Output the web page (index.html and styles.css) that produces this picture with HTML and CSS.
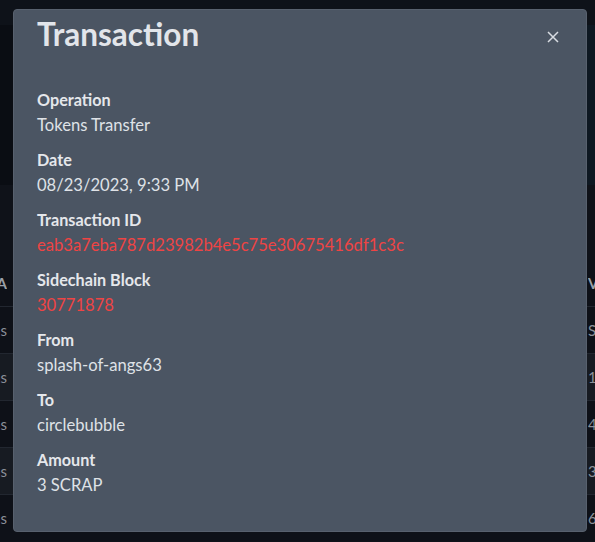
FILE: index.html
```html
<!DOCTYPE html>
<html>
<head>
    <title>Transaction</title>
    <link rel="stylesheet" href="styles.css">
</head>
<body>
    <div class="page">
        <div class="topbar"></div>
        <div class="hero">
            <div class="hero-left"></div>
            <div class="hero-right"></div>
        </div>
        <div class="spacer"></div>
        <div class="table">
            <div class="row head"><span class="cell-l">SYMBOL &nbsp; A</span><span class="cell-r">VALUE</span></div>
            <div class="row"><span class="cell-l">Tokens</span><span class="cell-r">SCRAP</span></div>
            <div class="row alt"><span class="cell-l">Tokens</span><span class="cell-r">1.000</span></div>
            <div class="row"><span class="cell-l">Tokens</span><span class="cell-r">4.000</span></div>
            <div class="row alt"><span class="cell-l">Tokens</span><span class="cell-r">3.000</span></div>
            <div class="row"><span class="cell-l">Tokens</span><span class="cell-r">6.000</span></div>
        </div>
    </div>

    <!-- modal over the dimmed page -->
    <div class="modal">
        <div class="modal-head">
            <h2>Transaction</h2>
            <button class="close" aria-label="Close">
                <svg width="12" height="12" viewBox="0 0 12 12">
                    <path d="M1 1 L11 11 M11 1 L1 11" stroke="#d8dce2" stroke-width="1.5" fill="none"/>
                </svg>
            </button>
        </div>
        <div class="modal-body">
            <div class="field">
                <div class="label">Operation</div>
                <div class="value">Tokens Transfer</div>
            </div>
            <div class="field">
                <div class="label">Date</div>
                <div class="value">08/23/2023, 9:33 PM</div>
            </div>
            <div class="field">
                <div class="label">Transaction ID</div>
                <div class="value link">eab3a7eba787d23982b4e5c75e30675416df1c3c</div>
            </div>
            <div class="field">
                <div class="label">Sidechain Block</div>
                <div class="value link">30771878</div>
            </div>
            <div class="field">
                <div class="label">From</div>
                <div class="value">splash-of-angs63</div>
            </div>
            <div class="field">
                <div class="label">To</div>
                <div class="value">circlebubble</div>
            </div>
            <div class="field">
                <div class="label">Amount</div>
                <div class="value">3 SCRAP</div>
            </div>
        </div>
    </div>
</body>
</html>
```

FILE: styles.css
```css
body {
    margin: 0;
    font-family: Lato, "Open Sans", sans-serif;
    background-color: #0f131a;
    overflow: hidden;
    height: 542px;
}

.page {
    width: 595px;
}

.topbar {
    height: 25px;
    background-color: #0e1219;
}

.hero {
    display: flex;
    height: 160px;
}

.hero-left {
    flex: 1;
    background-color: #0a0d13;
}

.hero-right {
    width: 8px;
    background-color: #0e1822;
}

.spacer {
    height: 75px;
    background-color: #0f1219;
}

.row {
    display: flex;
    justify-content: space-between;
    align-items: center;
    height: 46px;
    border-top: 1px solid #222730;
    background-color: #0e1118;
    color: #8b9099;
    font-size: 15px;
}

.row.head {
    border-top: none;
    color: #9aa0a8;
    font-weight: bold;
}

.row.alt {
    background-color: #171b22;
}

.cell-l {
    width: 7px;
    overflow: hidden;
    white-space: nowrap;
    direction: rtl;
}

.cell-r {
    width: 7px;
    overflow: hidden;
    white-space: nowrap;
}

.modal {
    position: absolute;
    left: 13px;
    top: 9px;
    width: 574px;
    height: 523px;
    box-sizing: border-box;
    background-color: #4b5563;
    border: 1px solid #58616e;
    border-radius: 4px;
    color: #e5e7eb;
}

.modal-head {
    display: flex;
    justify-content: space-between;
    align-items: flex-start;
    padding: 6px 23px 0 23px;
}

.modal-head h2 {
    margin: 0;
    font-size: 31.5px;
    line-height: 36px;
    font-weight: bold;
    color: #e2e5ea;
}

.close {
    background: none;
    border: none;
    padding: 0;
    margin-top: 15px;
    margin-right: 4px;
    width: 12px;
    height: 12px;
    cursor: pointer;
}

.close svg {
    display: block;
}

.modal-body {
    padding: 36px 23px 0 23px;
    display: flex;
    flex-direction: column;
    gap: 11px;
}

.label {
    font-size: 16.2px;
    line-height: 24px;
    font-weight: bold;
}

.value {
    margin-top: 1px;
    font-size: 16.6px;
    line-height: 24px;
    color: #dfe2e7;
}

.value.link {
    color: #ef4444;
}
```
